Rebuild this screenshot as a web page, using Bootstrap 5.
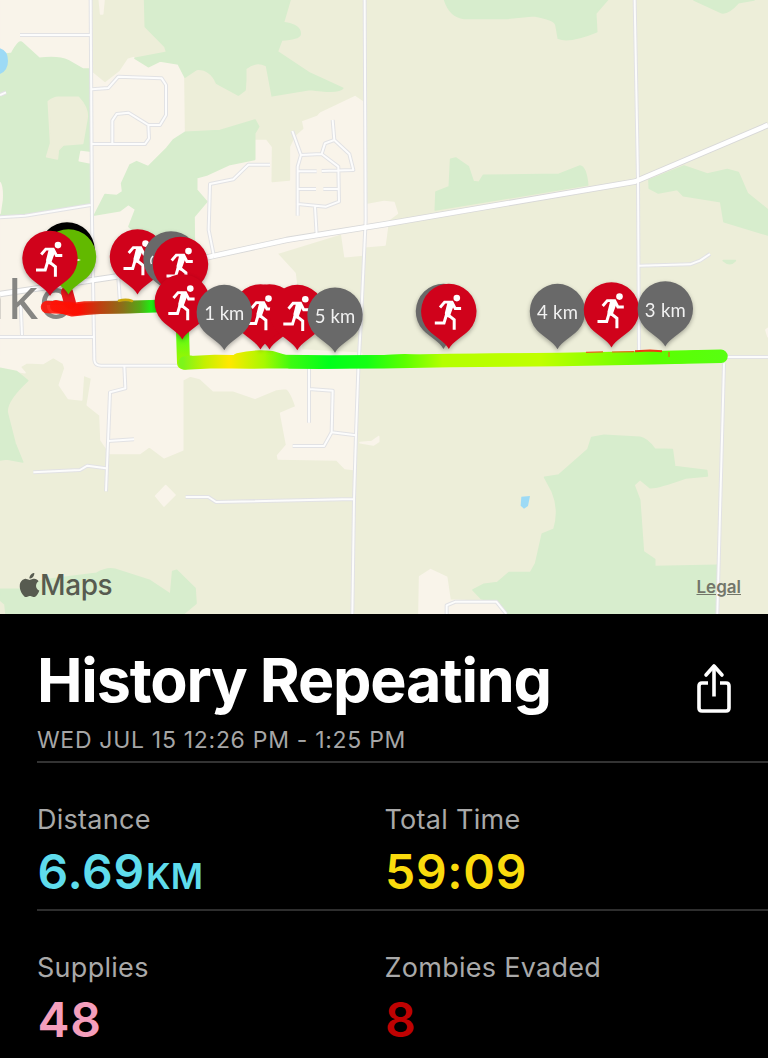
<!DOCTYPE html>
<html lang="en">
<head>
  <meta charset="UTF-8" />
  <meta name="viewport" content="width=device-width, initial-scale=1.0"/>
  <title>History Repeating</title>
  <link href="https://cdn.jsdelivr.net/npm/bootstrap@5.3.0/dist/css/bootstrap.min.css" rel="stylesheet">
  <style>
    body {
      background: #000;
      color: #fff;
      font-family: Inter, "Liberation Sans", sans-serif;
      overflow: hidden;
    }
    .run-map {
      height: 614px;
      background: #edeed9;
    }
    .run-map svg.terrain {
      width: 768px;
      height: 614px;
    }
    .field { fill: #edeed9; stroke: #edeed9; }
    .town { fill: #f9f4ea; stroke: #f9f4ea; }
    .wood { fill: #d7edcd; stroke: #d7edcd; }
    .water { fill: #9ddaf5; }
    .areas { stroke-width: 5; stroke-linejoin: round; }
    .roads { fill: none; stroke-linejoin: round; }
    .case { stroke: #e2e2e4; stroke-width: 12; }
    .lane { stroke: #fcfcfc; stroke-width: 6; }
    .case-major { stroke: #d8d8d8; stroke-width: 19; }
    .lane-major { stroke: #fff; stroke-width: 14; }
    .place { font-size: 56px; fill: #868683; }
    .pins text {
      font-family: Lato, sans-serif;
      font-size: 18.5px;
      fill: #f1f1f1;
      text-anchor: middle;
    }
    .pins { filter: drop-shadow(0 2px 2px rgba(0, 0, 0, .3)); }
    .map-footer {
      padding: 0 27px 15px 19px;
      color: #575b50;
    }
    .brand-text {
      font-size: 28px;
      line-height: 28px;
      font-weight: 500;
      letter-spacing: -.4px;
    }
    .legal-link {
      font-size: 17px;
      line-height: 24px;
      font-weight: 600;
      color: #73766a;
    }
    .summary { padding-left: 37px; }
    .summary-head {
      padding: 31px 36px 6px 0;
      border-bottom: 2px solid #333;
    }
    .run-title {
      font-size: 61px;
      line-height: 70px;
      letter-spacing: -1.2px;
    }
    .run-date {
      font-size: 23px;
      line-height: 30px;
      margin-top: 10px;
      color: #a6a6a6;
      letter-spacing: .7px;
    }
    .share-btn { margin-top: 16px; }
    .stat-row {
      padding: 40px 0 9px;
      border-bottom: 2px solid #2e2e2e;
    }
    .stat-row:last-child { border-bottom: 0; }
    .stat-cell { width: 347.5px; }
    .stat-label {
      font-size: 27px;
      line-height: 34px;
      color: #a9a9a9;
      letter-spacing: .28px;
    }
    .stat-value {
      font-size: 48px;
      line-height: 56px;
      height: 56px;
      margin-top: 7px;
      padding-left: .5px;
      letter-spacing: .7px;
    }
    .stat-unit {
      font-size: 35px;
      line-height: 1;
      margin-left: 1px;
      letter-spacing: .3px;
    }
    .cyan { color: #5fdcec; }
    .gold { color: #fadb0d; }
    .rose { color: #f49ebc; }
    .blood { color: #bf0202; }
  </style>
</head>
<body>

  <!-- Map -->
  <div class="run-map position-relative overflow-hidden">
    <svg class="terrain d-block" viewBox="0 0 768 614">
      <defs>
        <path id="pin" d="M0,37.5 C-4,30 -14,25 -20.5,18.5 A27.7,27.7 0 1 1 20.5,18.5 C14,25 4,30 0,37.5Z"/>
        <g id="runner" fill="none" stroke="#fff" stroke-width="2.9">
          <circle cx="8" cy="-13.4" r="3.3" fill="#fff" stroke="none"/>
          <path d="M-8.8,-4 L-4.2,-9.4 H3.2 L6.4,-3 H12.3"/>
          <path d="M-1,3.2 L5.4,8.3 V18.2 M-2.4,3.5 L-4.8,11.4 H-14" stroke-width="3"/>
          <path d="M-1,-10.2 L4.4,-9.6 L4.6,-5 L1.6,3.2 L2,6.6 L-3.6,5 Q-4.6,1.5 -3.2,-1.5Z" fill="#fff" stroke="none"/>
        </g>
        <g id="chase"><use href="#pin" fill="#d0021b"/><use href="#runner"/></g>
        <linearGradient id="east" gradientUnits="userSpaceOnUse" x1="183" y1="0" x2="724" y2="0">
          <stop offset="0" stop-color="#7df51a"/>
          <stop offset=".04" stop-color="#c4f000"/>
          <stop offset=".085" stop-color="#ffe800"/>
          <stop offset=".15" stop-color="#a8f800"/>
          <stop offset=".2" stop-color="#3cfb10"/>
          <stop offset=".27" stop-color="#00ff1a"/>
          <stop offset=".34" stop-color="#14ff14"/>
          <stop offset=".41" stop-color="#5cff00"/>
          <stop offset=".48" stop-color="#b4ff00"/>
          <stop offset=".66" stop-color="#c0ff00"/>
          <stop offset=".77" stop-color="#8cff00"/>
          <stop offset=".87" stop-color="#5aff00"/>
          <stop offset="1" stop-color="#58ff10"/>
        </linearGradient>
        <linearGradient id="west" gradientUnits="userSpaceOnUse" x1="46" y1="0" x2="160" y2="0">
          <stop offset="0" stop-color="#ff1408"/>
          <stop offset=".3" stop-color="#fb0d00"/>
          <stop offset=".46" stop-color="#c23a0e"/>
          <stop offset=".68" stop-color="#877017"/>
          <stop offset=".82" stop-color="#55a514"/>
          <stop offset=".92" stop-color="#1eec10"/>
        </linearGradient>
        <linearGradient id="south" gradientUnits="userSpaceOnUse" x1="0" y1="330" x2="0" y2="364">
          <stop offset="0" stop-color="#4dff1a"/>
          <stop offset="1" stop-color="#a4f400"/>
        </linearGradient>
        <!-- minor roads, drawn twice: casing and lane -->
        <path id="minor" d="M272,0 L276,660 L283,1080 Q284,1097 304,1097 H570
          M60,105 H272 M0,652 L75,647 L272,615 M0,285 L18,277
          M276,268 L325,264 L355,230 L485,235 L498,255 V345 L480,375 H445 L385,338 L350,342 L337,362 V430
          M445,375 L447,415 L435,432 H276
          M810,494 H745 L700,538 L630,552 L626,690 L642,770
          M877,393 L903,465 L965,462 L1015,500 L1017,605 L978,620 L893,612 V647 M903,465 L893,500 V612
          M965,462 L975,430 L1003,420 L1048,462 L1060,510 L965,513 M998,360 L1003,420
          M893,514 H950 M893,567 H948 M970,567 H1015 M945,620 L950,705
          M1094,0 L1097,660 L1085,920 L1075,1110 L1068,1305 L1062,1500 L1057,1842
          M355,832 L360,910 M0,1011 H280 M62,910 L66,1005
          M373,1097 L376,1165 L330,1177 L318,1474 M325,1323 L402,1318 M318,1405 L262,1397 L240,1410 L100,1417
          M557,1491 H625 L648,1506 L1062,1497
          M927,1100 V1268 M927,1167 L998,1172 L995,1297 L972,1338 H878 M995,1297 L1068,1306
          M1904,0 L1914,540 L1917,1060 M1917,797 L2070,793 L2100,782 L2130,762
          M2180,1071 H2304 M2172,1090 L2152,1842 M1340,1842 V1816 L1367,1805 H1489 L1519,1842"/>
        <path id="major" d="M640,768 L860,720 L1152,673 L1905,545 L2304,375"/>
        <path id="middle" d="M0,882 L280,840 L400,822 L640,768"/>
      </defs>

      <g transform="scale(.33333)">
        <g class="areas">
          <path class="town" d="M0,0 H272 V215 L315,250 L360,215 L385,178 L400,173 L445,203 L480,183 L535,192 L555,235 V395 L765,380 V418 L800,415 L818,440 L815,545 L868,540 V440 L885,405 L910,385 L903,362 L950,345 L1065,290 L1095,310 V615 L1152,605 L1182,608 L1192,640 L1165,660 L1155,735 L1095,740 L1090,765 L1035,770 L1025,700 L830,760 L885,820 L895,900 L905,1050 L1085,1060 L1075,1110 L1060,1408 L1035,1405 L1010,1380 L835,1377 L833,1367 L860,1335 L842,1240 L888,1220 Q870,1165 855,1165 L830,1168 L765,1195 L700,1172 H640 L600,1135 L570,1128 L548,1140 V1350 L492,1373 L448,1340 L420,1360 H330 L303,1320 L300,1245 L262,1215 L275,1135 L250,1125 L245,1200 L205,1195 L178,1155 L195,1105 L190,1090 L160,1072 L130,1090 L80,1088 L60,1100 L75,1118 L0,1105Z"/>
          <path class="field" d="M555,233 L590,210 L625,212 L650,252 L715,289 L812,290 L930,270 L1000,285 L950,345 L903,362 L908,385 L885,405 L868,440 V540 L817,544 L818,440 L800,417 L765,417 V362 L660,392 L557,394Z"/>
          <path class="town" d="M298,0 H312 L308,42 L302,42Z M497,1457 L525,1485 L492,1518 L467,1488Z M1080,1328 L1115,1325 L1136,1310 V1325 L1120,1335Z M2298,990 L2304,985 V1010Z"/>
          <path class="town" d="M1257,1842 L1259,1730 L1292,1709 L1340,1732 L1350,1800 L1489,1806 L1517,1842Z"/>
          <path class="wood" d="M0,165 L35,160 Q58,118 66,128 L118,175 Q175,168 205,182 L248,207 H270 V612 L75,643 L0,648Z"/>
          <path class="field" d="M145,305 Q160,292 175,292 H235 Q262,320 262,350 L248,430 L190,435 L175,450 L172,477 L140,470 L152,430Z"/>
          <path class="town" d="M243,455 L268,458 V488 L238,482Z M0,548 Q8,560 6,600 L0,640Z"/>
          <path class="wood" d="M434,0 H870 L850,68 Q905,75 900,105 Q895,117 845,120 L832,155 L930,220 L1028,265 Q1018,280 930,268 L812,288 L795,200 Q770,188 742,210 L735,270 L715,285 L650,250 Q630,205 590,208 L555,231 L535,192 L480,183 L445,200 L405,175 L500,157 L495,140 L436,80Z"/>
          <path class="field" d="M742,290 L742,208 Q768,188 795,200 L812,290Z"/>
          <path class="wood" d="M555,397 L660,392 L765,360 L776,380 L764,400 V478 L690,493 L620,525 L590,533 V570 L620,605 L582,650 L583,740 H450 L387,680 L407,628 L385,613 L360,632 L284,645 L315,584 L350,587 L368,575 L365,550 L390,495 L410,485 L445,500 L500,445 L520,420Z"/>
          <path class="wood" d="M1334,0 Q1350,50 1392,55 H1522 L1602,47 Q1665,58 1668,75 L1675,115 Q1710,128 1790,95 L1787,40 L1822,0Z M2082,0 L2165,38 Q2185,42 2215,8 L2262,0Z"/>
          <path class="wood" d="M1306,630 L1308,576 L1348,560 L1352,478 L1367,474 L1405,500 L1420,545 L1437,547 L1450,526 L1677,523 L1740,498 Q1758,500 1763,555Z"/>
          <path class="wood" d="M1947,540 L2052,498 L2122,522 L2182,509 L2215,518 L2242,580 L2304,630 V705 L2172,665 L2162,605 L2050,587 L2032,568 L1975,579 L1948,565Z M2170,782 H2206 Q2190,800 2170,782Z"/>
          <path class="wood" d="M0,1105 L50,1115 L83,1142 Q15,1205 22,1240 L45,1330 L68,1386 L20,1377 L0,1380Z"/>
          <path class="wood" d="M0,1768 L60,1768 L130,1740 L290,1720 Q320,1702 345,1708 L450,1742 L512,1783 L518,1715 L530,1711 L585,1765 L588,1810 L550,1842 H18 L15,1812 L0,1800Z"/>
          <path class="wood" d="M1419,1770 L1452,1753 L1492,1748 L1527,1718 L1592,1717 L1607,1690 L1627,1602 L1662,1588 Q1680,1530 1657,1475 L1634,1432 L1677,1425 L1764,1348 L1775,1313 L1812,1306 L1920,1312 Q1940,1315 1964,1347 L2017,1349 L2024,1400 L2120,1412 L2122,1428 L2057,1434 Q1970,1465 1950,1463 L1920,1438 L1902,1455 L1919,1500 L1930,1655 L1964,1678 V1700 L2152,1696 V1842 H1517 L1490,1805 L1444,1796Z"/>
        </g>
        <path class="water" d="M0,145 Q24,152 24,183 Q24,212 0,222Z M1564,1490 L1590,1488 L1584,1518 L1572,1526 L1562,1517Z"/>
        <g class="roads">
          <use href="#minor" class="case"/>
          <use href="#middle" class="case-major"/>
          <use href="#major" class="case-major"/>
          <use href="#minor" class="lane"/>
          <use href="#middle" class="lane-major"/>
          <use href="#major" class="lane-major"/>
        </g>
      </g>

      <text class="place" x="-28.500 8 39" y="318.500">nke</text>

      <!-- Route coloured by pace -->
      <g fill="none" stroke-linecap="round" stroke-linejoin="round">
        <path d="M67,292 L70,303" stroke="#e8161a" stroke-width="12"/>
        <path d="M47,307 L70,308 L74,309 L85,307.5 L120,307 L160,306" stroke="url(#west)" stroke-width="12.5" opacity=".9"/>
        <path d="M56,306 L72,310.5 L86,309 L100,308 L130,307.5 L160,306" stroke="url(#west)" stroke-width="12" opacity=".9"/>
        <path d="M119,300.8 Q126,298.500 132,301" stroke="#c9a80c" stroke-width="2.5"/>
        <path d="M182.5,330 L183.5,363 L190,362" stroke="url(#south)" stroke-width="13"/>
        <path d="M185,363 L215,361.5 L250,362 L280,361.5 L330,362 L384,361.8 L450,360.5 L560,359.5 L640,358 L721,356.3" stroke="url(#east)" stroke-width="13.5"/>
        <path d="M238,359 Q255,355 272,357 L290,362.5 L320,363 L350,362 L384,361 L405,360 L420,361 L500,359.5 L540,360 L600,358.5 L680,357.5 L700,356 L719,357" stroke="url(#east)" stroke-width="12"/>
        <path d="M586,352.3 L603,351.8 M612,352 L634,351.6 M669,352 L669,357" stroke="#e8641a" stroke-width="1.2" stroke-linecap="butt"/>
        <path d="M635,351.3 L650,350.6 L662,351.2" stroke="#ee3a12" stroke-width="2" stroke-linecap="butt"/>
      </g>

      <!-- Pins -->
      <g class="pins">
        <use href="#pin" x="67" y="250" fill="#000"/>
        <use href="#pin" x="68.5" y="257" fill="#62b900"/>
        <path d="M76,258.500 L81,260 L76,261.500Z" fill="#fff"/>
        <use href="#chase" x="50" y="258.500"/>
        <use href="#chase" x="137.500" y="257"/>
        <use href="#pin" x="171" y="259" fill="#696969"/>
        <path d="M153,256 Q149.500,260 151.500,264" fill="none" stroke="#eee" stroke-width="1.500"/>
        <use href="#chase" x="180.500" y="264.500"/>
      </g>
      <g class="pins">
        <use href="#chase" x="182.300" y="302"/>
        <use href="#chase" x="269.500" y="312"/>
        <use href="#chase" x="260.500" y="312"/>
        <use href="#pin" x="224.300" y="312.700" fill="#696969"/>
        <text x="224.300" y="320" textLength="40">1 km</text>
        <use href="#chase" x="297.300" y="312.700"/>
        <use href="#pin" x="335" y="315.300" fill="#696969"/>
        <text x="335" y="322.500" textLength="40.500">5 km</text>
        <use href="#pin" x="443.500" y="311.500" fill="#696969"/>
        <use href="#chase" x="448.800" y="311.500"/>
        <use href="#pin" x="557.500" y="311.700" fill="#696969"/>
        <text x="557.500" y="319" textLength="41">4 km</text>
        <use href="#chase" x="611.500" y="310"/>
        <use href="#pin" x="665.300" y="309" fill="#696969"/>
        <text x="665.300" y="316.500" textLength="41">3 km</text>
      </g>
    </svg>

    <div class="map-footer position-absolute bottom-0 start-0 end-0 d-flex justify-content-between align-items-end">
      <div class="d-flex align-items-center">
        <svg width="21" height="24" viewBox="1 0 14 16" fill="currentColor">
          <path d="M11.182.008C11.148-.03 9.923.023 8.857 1.18c-1.066 1.156-.902 2.482-.878 2.516s1.52.087 2.475-1.258.762-2.391.728-2.43m3.314 11.733c-.048-.096-2.325-1.234-2.113-3.422s1.675-2.789 1.698-2.854-.597-.79-1.254-1.157a3.7 3.7 0 0 0-1.563-.434c-.108-.003-.483-.095-1.254.116-.508.139-1.653.589-1.968.607-.316.018-1.256-.522-2.267-.665-.647-.125-1.333.131-1.824.328-.49.196-1.422.754-2.074 2.237-.652 1.482-.311 3.83-.067 4.56s.625 1.924 1.273 2.796c.576.984 1.34 1.667 1.659 1.899s1.219.386 1.843.067c.502-.308 1.408-.485 1.766-.472.357.013 1.061.154 1.782.539.571.197 1.111.115 1.652-.105.541-.221 1.324-1.059 2.238-2.758q.52-1.185.473-1.282"/>
        </svg>
        <span class="brand-text">Maps</span>
      </div>
      <a href="#" class="legal-link">Legal</a>
    </div>
  </div>

  <!-- Run summary -->
  <div class="summary">
    <div class="summary-head d-flex justify-content-between align-items-start">
      <div>
        <h1 class="run-title fw-bold m-0 text-nowrap">History Repeating</h1>
        <div class="run-date">WED JUL 15 12:26 PM - 1:25 PM</div>
      </div>
      <button class="share-btn btn p-0 border-0 lh-1" aria-label="Share">
        <svg width="36" height="52" viewBox="0 0 36 52" fill="none" stroke="#fff" stroke-width="3.6" stroke-linecap="round" stroke-linejoin="round">
          <path d="M12,22 H6 Q3,22 3,25 V47 Q3,50 6,50 H30 Q33,50 33,47 V25 Q33,22 30,22 H24" stroke-linecap="butt"/>
          <path d="M18,35.500 V5" stroke-linecap="butt"/>
          <path d="M10,14 L18,5 L26,14"/>
        </svg>
      </button>
    </div>

    <div class="stat-row d-flex">
      <div class="stat-cell">
        <div class="stat-label">Distance</div>
        <div class="stat-value fw-semibold cyan">6.69<span class="stat-unit">KM</span></div>
      </div>
      <div class="stat-cell">
        <div class="stat-label">Total Time</div>
        <div class="stat-value fw-semibold gold">59:09</div>
      </div>
    </div>

    <div class="stat-row d-flex">
      <div class="stat-cell">
        <div class="stat-label">Supplies</div>
        <div class="stat-value fw-semibold rose">48</div>
      </div>
      <div class="stat-cell">
        <div class="stat-label">Zombies Evaded</div>
        <div class="stat-value fw-semibold blood">8</div>
      </div>
    </div>
  </div>

  <script src="https://cdn.jsdelivr.net/npm/bootstrap@5.3.0/dist/js/bootstrap.bundle.min.js"></script>
</body>
</html>
